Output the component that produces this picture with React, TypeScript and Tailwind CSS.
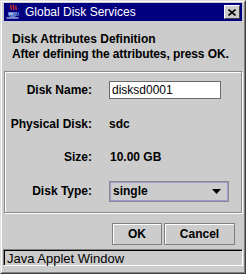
import React from "react";

const font = { fontFamily: '"Liberation Sans", Arial, sans-serif' };

const JavaIcon = () => (
  <svg width="16" height="16" viewBox="0 0 16 16">
    <path d="M6 1c-1 2 1 3 0 5M8.5 0.5c-1.5 2 1.5 3 0 5.5M11 1.5c-1 2 1 3 0 4.5" stroke="#e03020" strokeWidth="1.3" fill="none" />
    <path d="M3 8h9v2c0 2-2 3.5-4.5 3.5S3 12 3 10z" fill="#5a78c8" />
    <path d="M12 8.5c2 0 2.5 2.5 0 3" stroke="#5a78c8" strokeWidth="1.2" fill="none" />
    <path d="M1.5 14h12" stroke="#c8d0f0" strokeWidth="1.2" />
    <path d="M4 9h4v1.5H4z" fill="#b8c8f0" />
  </svg>
);

const Row = ({ label, children }: { label: string; children: React.ReactNode }) => (
  <div className="flex items-center">
    <div className="w-[87px] text-right font-bold">{label}</div>
    <div className="ml-[17px] flex items-center">{children}</div>
  </div>
);

export default function App() {
  return (
    <div
      className="w-[246px] h-[274px] bg-[#cccccc] text-black text-[12px] leading-[15px] border border-t-[#e0e0e0] border-l-[#e0e0e0] border-r-[#404040] border-b-[#404040]"
      style={font}
    >
      <div className="h-full flex flex-col border border-t-white border-l-white border-r-[#808080] border-b-[#808080] p-px">
        <div className="px-px">
          {/* title bar */}
          <div className="h-[18px] bg-[#000080] flex items-center pl-px pr-[2px] text-white">
            <JavaIcon />
            <span className="ml-[4px] text-[12px]">Global Disk Services</span>
            <div className="ml-auto w-[16px] h-[14px] bg-[#cccccc] border border-t-white border-l-white border-r-[#404040] border-b-[#404040] flex items-center justify-center">
              <svg width="8" height="7" viewBox="0 0 8 7">
                <path d="M0.5 0.5L7.5 6.5M7.5 0.5L0.5 6.5" stroke="#000" strokeWidth="1.6" />
              </svg>
            </div>
          </div>

          <div className="mt-[11px] pl-[8px] font-bold">
            <div>Disk Attributes Definition</div>
            <div className="tracking-[-0.1px]">After defining the attributes, press OK.</div>
          </div>

          {/* form panel */}
          <div className="mt-[9px] h-[142px] border border-[#8a8a8a] shadow-[inset_1px_1px_0_#ffffff,1px_1px_0_#ffffff] pt-[9px] flex flex-col">
            <Row label="Disk Name:">
              <div className="w-[112px] h-[18px] bg-white border border-[#6a6a6a] pl-[2px] flex items-center">
                disksd0001
              </div>
            </Row>
            <div className="mt-[16px] h-[18px] flex items-center">
              <div className="w-[87px] text-right font-bold">Physical Disk:</div>
              <div className="ml-[17px] font-bold">sdc</div>
            </div>
            <div className="mt-[15px] h-[18px] flex items-center">
              <div className="w-[87px] text-right font-bold">Size:</div>
              <div className="ml-[18px] font-bold">10.00 GB</div>
            </div>
            <div className="mt-[15px]">
              <Row label="Disk Type:">
                <div className="w-[120px] h-[21px] border border-[#8a8a8a] shadow-[inset_0_0_0_1px_#9a9ad0] flex items-center pl-[3px] pr-[7px] font-bold">
                  single
                  <svg className="ml-auto" width="9" height="5" viewBox="0 0 9 5">
                    <path d="M0 0h9L4.5 5z" fill="#000" />
                  </svg>
                </div>
              </Row>
            </div>
          </div>

          {/* buttons */}
          <div className="mt-[10px] flex justify-end gap-[2px] pr-[7px] font-bold">
            <button className="w-[50px] h-[22px] border border-[#808080] shadow-[inset_1px_1px_0_#ffffff] bg-[#cccccc]">
              OK
            </button>
            <button className="w-[71px] h-[22px] border border-[#808080] shadow-[inset_1px_1px_0_#ffffff] bg-[#cccccc]">
              Cancel
            </button>
          </div>
        </div>

        {/* status bar */}
        <div className="mt-[4px] h-[17px] border border-t-[#808080] border-l-[#808080] border-r-white border-b-white">
          <div className="h-full border-t border-l border-black pl-[2px] flex items-center text-[13px]">
            Java Applet Window
          </div>
        </div>
      </div>
    </div>
  );
}
